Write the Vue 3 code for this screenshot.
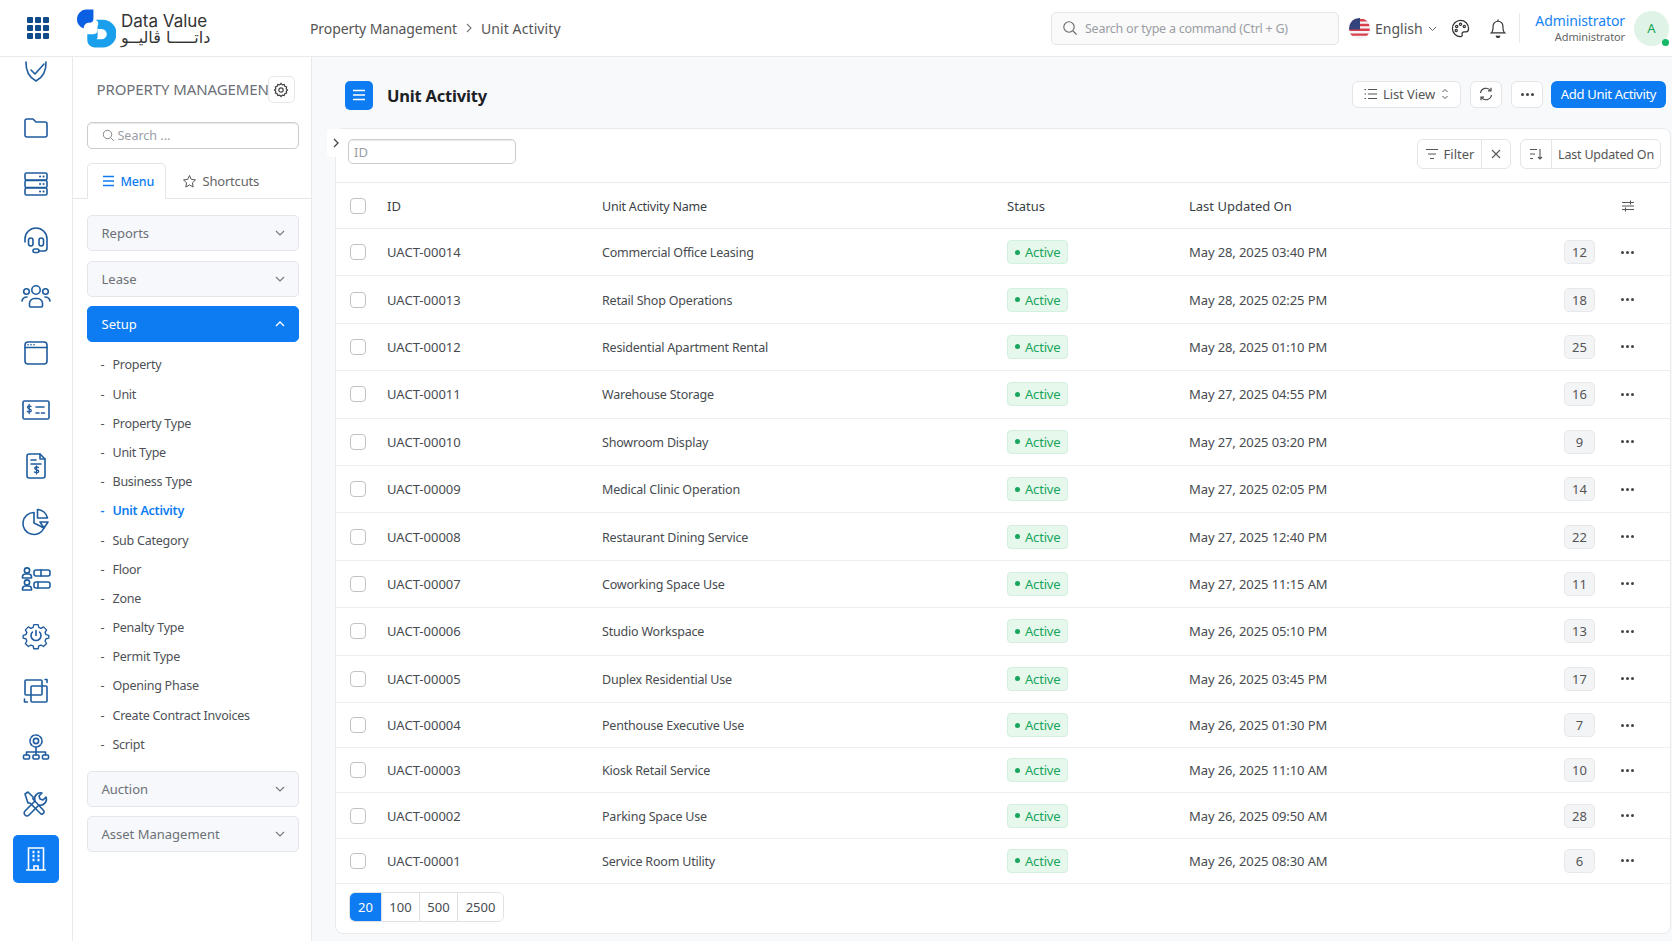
<script setup>
const railIcons = ['shield', 'folder', 'server', 'headset', 'team', 'browser', 'bill', 'invoice', 'pie', 'people', 'gear', 'squares', 'org', 'tools']

const setupLinks = [
  'Property', 'Unit', 'Property Type', 'Unit Type', 'Business Type', 'Unit Activity', 'Sub Category',
  'Floor', 'Zone', 'Penalty Type', 'Permit Type', 'Opening Phase', 'Create Contract Invoices', 'Script'
]

const rows = [
  { id: 'UACT-00014', name: 'Commercial Office Leasing', updated: 'May 28, 2025 03:40 PM', count: 12 },
  { id: 'UACT-00013', name: 'Retail Shop Operations', updated: 'May 28, 2025 02:25 PM', count: 18 },
  { id: 'UACT-00012', name: 'Residential Apartment Rental', updated: 'May 28, 2025 01:10 PM', count: 25 },
  { id: 'UACT-00011', name: 'Warehouse Storage', updated: 'May 27, 2025 04:55 PM', count: 16 },
  { id: 'UACT-00010', name: 'Showroom Display', updated: 'May 27, 2025 03:20 PM', count: 9 },
  { id: 'UACT-00009', name: 'Medical Clinic Operation', updated: 'May 27, 2025 02:05 PM', count: 14 },
  { id: 'UACT-00008', name: 'Restaurant Dining Service', updated: 'May 27, 2025 12:40 PM', count: 22 },
  { id: 'UACT-00007', name: 'Coworking Space Use', updated: 'May 27, 2025 11:15 AM', count: 11 },
  { id: 'UACT-00006', name: 'Studio Workspace', updated: 'May 26, 2025 05:10 PM', count: 13 },
  { id: 'UACT-00005', name: 'Duplex Residential Use', updated: 'May 26, 2025 03:45 PM', count: 17 },
  { id: 'UACT-00004', name: 'Penthouse Executive Use', updated: 'May 26, 2025 01:30 PM', count: 7, tight: true },
  { id: 'UACT-00003', name: 'Kiosk Retail Service', updated: 'May 26, 2025 11:10 AM', count: 10, tight: true },
  { id: 'UACT-00002', name: 'Parking Space Use', updated: 'May 26, 2025 09:50 AM', count: 28, tight: true },
  { id: 'UACT-00001', name: 'Service Room Utility', updated: 'May 26, 2025 08:30 AM', count: 6, tight: true }
]
</script>

<template>
  <div class="page">
    <header class="topbar">
      <div class="apps">
        <i v-for="n in 9" :key="n"></i>
      </div>
      <div class="logo">
        <svg class="logo-mark" width="40" height="43" viewBox="0 0 39 39">
          <path d="M9.500 1H17v9a4 4 0 0 1-4 4h-1a5 5 0 0 0-4.500 5.500A9.500 9.500 0 0 1 9.500 1z" fill="#0b5fe3" />
          <path d="M20 11h6a13.500 13.500 0 0 1 0 27h-8a7 7 0 0 1-7-7v-6h6a4 4 0 0 0 4-4v-4a4 4 0 0 0-2-6z" fill="#1a9fec" />
          <path d="M21 20h4a4.500 4.500 0 0 1 0 10h-5a3 3 0 0 0 1-3z" fill="#fff" />
        </svg>
        <div class="logo-text">
          <span class="logo-en">Data Value</span>
          <span class="logo-ar">داتـــــا ڤاليــو</span>
        </div>
      </div>
      <nav class="crumbs">
        <span>Property Management</span>
        <svg width="10" height="10" viewBox="0 0 10 10"><path d="M3 1l4 4-4 4" fill="none" stroke="#777" stroke-width="1.100" /></svg>
        <span class="crumb-last">Unit Activity</span>
      </nav>
      <div class="command">
        <svg width="16" height="16" viewBox="0 0 16 16"><circle cx="7" cy="7" r="5.200" fill="none" stroke="#666" stroke-width="1.100" /><path d="M11 11l3.600 3.600" stroke="#666" stroke-width="1.100" /></svg>
        <span>Search or type a command (Ctrl + G)</span>
      </div>
      <div class="lang">
        <svg class="flag" width="21" height="21" viewBox="0 0 21 21">
          <defs><clipPath id="flagClip"><circle cx="10.500" cy="10.500" r="10.500" /></clipPath></defs>
          <g clip-path="url(#flagClip)">
            <rect width="21" height="21" fill="#f4f4f6" />
            <path d="M0 1h21v2.400H0zM0 5.800h21v2.400H0zM0 10.600h21V13H0zM0 15.400h21v2.400H0z" fill="#d8404c" />
            <rect width="11" height="11.500" fill="#33437c" />
          </g>
        </svg>
        <span>English</span>
        <svg width="9" height="9" viewBox="0 0 9 9"><path d="M1 3l3.500 3.500L8 3" fill="none" stroke="#666" stroke-width="1" /></svg>
      </div>
      <svg class="top-icon" width="19" height="19" viewBox="0 0 20 20" fill="none" stroke="#333" stroke-width="1.300">
        <path d="M10 1.500a8.500 8.500 0 0 0 0 17c1.600 0 2.200-1 1.800-2.200-.5-1.600.3-2.800 2-2.800h2c1.500 0 2.700-1.200 2.700-3.200C18.500 5 14.700 1.500 10 1.500z" />
        <circle cx="6" cy="8" r="1.200" /><circle cx="10" cy="5.500" r="1.200" /><circle cx="14" cy="8" r="1.200" /><circle cx="5.500" cy="12" r="1.200" />
      </svg>
      <svg class="top-icon bell" width="18" height="22" viewBox="0 0 20 22" fill="none" stroke="#333" stroke-width="1.300">
        <path d="M2.500 16.500c1.500-1.500 2-2.500 2-5.500V9a5.500 5.500 0 0 1 11 0v2c0 3 .5 4 2 5.500z" /><path d="M10 1.500v2" /><path d="M8 19.500a2 2 0 0 0 4 0" fill="#333" />
      </svg>
      <div class="sep"></div>
      <div class="user">
        <span class="user-name">Administrator</span>
        <span class="user-role">Administrator</span>
      </div>
      <div class="avatar">A<i></i></div>
    </header>

    <div class="body">
      <aside class="rail">
        <div class="rail-list">
          <div v-for="icon in railIcons" :key="icon" class="rail-item">
            <svg width="32" height="32" viewBox="0 0 32 32" fill="none" stroke="#1f5c9e" stroke-width="1.600" stroke-linecap="round" stroke-linejoin="round">
              <template v-if="icon === 'shield'">
                <path d="M6 7c-.3 9 2.500 15 10 19 7.500-4 10.300-10 10-19" /><path d="M11 15l4 4 9-10" />
              </template>
              <template v-else-if="icon === 'folder'">
                <path d="M5 9a2 2 0 0 1 2-2h6l3 3h9a2 2 0 0 1 2 2v11a2 2 0 0 1-2 2H7a2 2 0 0 1-2-2z" />
              </template>
              <template v-else-if="icon === 'server'">
                <rect x="5" y="5" width="22" height="7" rx="1.500" /><rect x="5" y="12.500" width="22" height="7" rx="1.500" /><rect x="5" y="20" width="22" height="7" rx="1.500" />
                <path d="M20 8.500h.1M23.500 8.500h.1M20 16h.1M23.500 16h.1M20 23.500h.1M23.500 23.500h.1" stroke-width="2" />
              </template>
              <template v-else-if="icon === 'headset'">
                <path d="M5 18v-3a11 11 0 0 1 22 0v9a3 3 0 0 1-3 3h-5" /><rect x="8.500" y="14" width="4.500" height="8" rx="2.200" /><rect x="19" y="14" width="4.500" height="8" rx="2.200" /><rect x="13" y="25" width="6" height="3.500" rx="1.700" />
              </template>
              <template v-else-if="icon === 'team'">
                <circle cx="16" cy="9" r="4.200" /><circle cx="6.500" cy="10.500" r="2.800" /><circle cx="25.500" cy="10.500" r="2.800" />
                <path d="M9.500 25v-2.500a5 5 0 0 1 5-5h3a5 5 0 0 1 5 5V25a1 1 0 0 1-1 1h-11a1 1 0 0 1-1-1z" /><path d="M2 20c.5-2.500 2-4 5-4M30 20c-.5-2.500-2-4-5-4" />
              </template>
              <template v-else-if="icon === 'browser'">
                <rect x="5" y="5" width="22" height="22" rx="3" /><path d="M5 10.500h22" /><path d="M8 7.800h.1M11 7.800h.1M14 7.800h.1" />
              </template>
              <template v-else-if="icon === 'bill'">
                <rect x="3" y="7" width="26" height="18" rx="1.500" /><path d="M16 13h8M16 19h3M21.500 19h3" />
                <path d="M11 12.500c-.8-.8-3.500-1-3.500.8 0 2 3.800 1 3.800 3.200 0 1.800-3 1.700-4 .7M9.200 10.500v9" stroke-width="1.300" />
              </template>
              <template v-else-if="icon === 'invoice'">
                <path d="M20 4H9a2 2 0 0 0-2 2v20a2 2 0 0 0 2 2h14a2 2 0 0 0 2-2V9z" /><path d="M20 4v5h5M11 10h5M11 14h10" />
                <path d="M18.500 17.500c-.8-.8-3.800-.8-3.800.8 0 1.900 4 1 4 3 0 1.700-3.200 1.600-4.300.7M16.500 16v8" stroke-width="1.300" />
              </template>
              <template v-else-if="icon === 'pie'">
                <path d="M14 6.500a11 11 0 1 0 10 15.500l-10-5z" /><path d="M17.500 3.500A10.500 10.500 0 0 1 27.500 12H17.500z" /><path d="M20 16h8l-4 6z" />
              </template>
              <template v-else-if="icon === 'people'">
                <circle cx="7" cy="7.500" r="2.600" /><path d="M2.500 15v-1.500a3 3 0 0 1 3-2.500h3a3 3 0 0 1 3 2.500V15z" /><rect x="14" y="7" width="16" height="6" rx="2" /><path d="M21 7v6" />
                <circle cx="7" cy="19.500" r="2.600" /><path d="M2.500 27v-1.500a3 3 0 0 1 3-2.500h3a3 3 0 0 1 3 2.500V27z" /><rect x="14" y="19" width="16" height="6" rx="2" /><path d="M18 19v6" />
              </template>
              <template v-else-if="icon === 'gear'">
                <path d="M13.500 4h5l.8 3.200 2.600 1.100 2.900-1.700 3.500 3.500-1.700 2.900 1.100 2.600 3.200.8v3.200l-3.200.8-1.100 2.600 1.700 2.900-3.500 3.500-2.900-1.700-2.600 1.100-.8 3.200h-5l-.8-3.200-2.600-1.100-2.900 1.700-3.500-3.500 1.700-2.900-1.100-2.600-3.200-.8v-3.200l3.200-.8 1.100-2.600-1.700-2.900 3.500-3.500 2.900 1.700 2.600-1.100z" transform="translate(2.200 2.200) scale(.86)" />
                <path d="M12.500 13a5 5 0 1 0 7 0M16 11.500v5" />
              </template>
              <template v-else-if="icon === 'squares'">
                <rect x="5" y="5" width="17" height="15" rx="1" /><rect x="11" y="11" width="16" height="16" rx="1" />
                <path d="M25 4.500h2v3M4.500 24v3h3" />
              </template>
              <template v-else-if="icon === 'org'">
                <circle cx="16" cy="9" r="2.600" /><circle cx="16" cy="9" r="6" stroke-dasharray="3 1.500" />
                <path d="M16 15v8M6.500 23v-3h19v3" /><rect x="3.500" y="23" width="6" height="4" rx="1" /><rect x="13" y="23" width="6" height="4" rx="1" /><rect x="22.500" y="23" width="6" height="4" rx="1" />
              </template>
              <template v-else-if="icon === 'tools'">
                <path d="M5 6l3-2 5 5 0 2 11 12a2.500 2.500 0 0 1-3 3L10 15H8z" /><path d="M26 9l-3 3-3-1-1-3 3-3a6 6 0 0 0-7 8L5 23a2.500 2.500 0 0 0 4 4l10-10a6 6 0 0 0 7-8z" />
              </template>
            </svg>
          </div>
          <div class="rail-active">
            <svg width="24" height="28" viewBox="0 0 24 28" fill="none" stroke="#fff" stroke-width="1.600">
              <path d="M4.500 25V3h15v22M2 25h20M10 25v-4h4v4" />
              <path d="M8.500 7h2M13.500 7h2M8.500 11h2M13.500 11h2M8.500 15h2M13.500 15h2" stroke-width="2.400" />
            </svg>
          </div>
        </div>
      </aside>

      <aside class="side">
        <div class="side-head">
          <span class="side-title">PROPERTY MANAGEMENT</span>
          <button class="gear-btn">
            <svg width="16" height="16" viewBox="0 0 16 16" fill="none" stroke="#444" stroke-width="1.200">
              <path d="M8 1.500l1.300 1.400 1.900-.4.600 1.800 1.800.6-.4 1.900L14.500 8l-1.300 1.200.4 1.900-1.800.6-.6 1.800-1.900-.4L8 14.500l-1.300-1.400-1.900.4-.6-1.800-1.800-.6.4-1.900L1.500 8l1.300-1.200-.4-1.900 1.800-.6.6-1.800 1.900.4z" />
              <circle cx="8" cy="8" r="2.200" />
            </svg>
          </button>
        </div>
        <div class="side-search">
          <svg width="13" height="13" viewBox="0 0 13 13"><circle cx="5.500" cy="5.500" r="4.200" fill="none" stroke="#888" /><path d="M8.700 8.700l3.200 3.200" stroke="#888" /></svg>
          <span>Search ...</span>
        </div>
        <div class="tabs">
          <div class="tab active">
            <svg width="13" height="12" viewBox="0 0 13 12"><path d="M1 1.500h11M1 6h11M1 10.500h11" stroke="#0d7cf2" stroke-width="1.400" /></svg>
            <span>Menu</span>
          </div>
          <div class="tab">
            <svg width="15" height="15" viewBox="0 0 15 15"><path d="M7.500 1.500l1.800 3.900 4.200.5-3.100 2.900.8 4.200-3.700-2.100-3.700 2.100.8-4.200L1.500 5.900l4.200-.5z" fill="none" stroke="#555" /></svg>
            <span>Shortcuts</span>
          </div>
        </div>

        <div class="accordion">
          <div class="acc">
            <span>Reports</span>
            <svg width="12" height="12" viewBox="0 0 12 12"><path d="M2 4l4 4 4-4" fill="none" stroke="#777" stroke-width="1.100" /></svg>
          </div>
          <div class="acc">
            <span>Lease</span>
            <svg width="12" height="12" viewBox="0 0 12 12"><path d="M2 4l4 4 4-4" fill="none" stroke="#777" stroke-width="1.100" /></svg>
          </div>
          <div class="acc open">
            <span>Setup</span>
            <svg width="12" height="12" viewBox="0 0 12 12"><path d="M2 8l4-4 4 4" fill="none" stroke="#fff" stroke-width="1.300" /></svg>
          </div>
          <ul class="links">
            <li v-for="link in setupLinks" :key="link" :class="{ current: link === 'Unit Activity' }">
              <span class="dash">-</span>{{ link }}
            </li>
          </ul>
          <div class="acc">
            <span>Auction</span>
            <svg width="12" height="12" viewBox="0 0 12 12"><path d="M2 4l4 4 4-4" fill="none" stroke="#777" stroke-width="1.100" /></svg>
          </div>
          <div class="acc">
            <span>Asset Management</span>
            <svg width="12" height="12" viewBox="0 0 12 12"><path d="M2 4l4 4 4-4" fill="none" stroke="#777" stroke-width="1.100" /></svg>
          </div>
        </div>
      </aside>

      <main class="main">
        <div class="title-row">
          <div class="page-icon">
            <svg width="14" height="12" viewBox="0 0 14 12"><path d="M1 1.500h12M1 6h12M1 10.500h12" stroke="#fff" stroke-width="1.600" /></svg>
          </div>
          <h1>Unit Activity</h1>
          <div class="actions">
            <button class="btn list-view">
              <svg width="13" height="12" viewBox="0 0 13 12"><path d="M4 1.500h9M4 6h9M4 10.500h9M.5 1.500h1.500M.5 6h1.500M.5 10.500h1.500" stroke="#555" /></svg>
              <span>List View</span>
              <svg width="8" height="12" viewBox="0 0 8 12"><path d="M1.500 4L4 1.500 6.500 4M1.500 8L4 10.500 6.500 8" fill="none" stroke="#555" /></svg>
            </button>
            <button class="btn square">
              <svg width="16" height="16" viewBox="0 0 16 16" fill="none" stroke="#444" stroke-width="1.200"><path d="M2.500 7a5.600 5.600 0 0 1 10-2.500M13.500 9a5.600 5.600 0 0 1-10 2.500" /><path d="M13 1.800v3h-3M3 14.200v-3h3" /></svg>
            </button>
            <button class="btn square dots"><i></i><i></i><i></i></button>
            <button class="btn primary">Add Unit Activity</button>
          </div>
        </div>

        <section class="card">
          <div class="collapse-tab">
            <svg width="10" height="12" viewBox="0 0 10 12"><path d="M3 2l4 4-4 4" fill="none" stroke="#444" stroke-width="1.300" /></svg>
          </div>
          <div class="filters">
            <div class="id-input">ID</div>
            <div class="filter-right">
              <div class="group filter-group">
                <div class="cell filter-cell">
                  <svg width="14" height="12" viewBox="0 0 14 12"><path d="M1 1.500h12M3 6h8M5 10.500h4" stroke="#555" stroke-width="1.100" /></svg>
                  <span>Filter</span>
                </div>
                <div class="cell close-cell">
                  <svg width="10" height="10" viewBox="0 0 10 10"><path d="M1 1l8 8M9 1l-8 8" stroke="#555" stroke-width="1.100" /></svg>
                </div>
              </div>
              <div class="group sort-group">
                <div class="cell sort-icon">
                  <svg width="14" height="14" viewBox="0 0 14 14" fill="none" stroke="#555" stroke-width="1.100"><path d="M1 2.500h7M1 7h5M1 11.500h3M11 2v10M9 10l2 2 2-2" /></svg>
                </div>
                <div class="cell sort-label">Last Updated On</div>
              </div>
            </div>
          </div>

          <div class="row head">
            <span class="check"></span>
            <span>ID</span>
            <span class="nm">Unit Activity Name</span>
            <span>Status</span>
            <span>Last Updated On</span>
            <span></span>
            <span class="end">
              <svg width="14" height="14" viewBox="0 0 14 14" fill="none" stroke="#555" stroke-width="1.100"><path d="M1 3.500h12M1 7h12M1 10.500h12M9.500 1.500v4M4.500 8.500v4" /></svg>
            </span>
          </div>
          <div v-for="row in rows" :key="row.id" class="row" :class="{ tight: row.tight }">
            <span class="check"></span>
            <span>{{ row.id }}</span>
            <span class="nm">{{ row.name }}</span>
            <span><span class="status"><i></i>Active</span></span>
            <span class="date">{{ row.updated }}</span>
            <span class="count-wrap"><span class="count">{{ row.count }}</span></span>
            <span class="end row-dots"><i></i><i></i><i></i></span>
          </div>

          <div class="pager">
            <button class="on">20</button>
            <button>100</button>
            <button>500</button>
            <button>2500</button>
          </div>
        </section>
      </main>
    </div>
  </div>
</template>

<style>
html, body {
  margin: 0;
  background: #fff;
}
</style>

<style scoped>
.page {
  width: 1672px;
  height: 941px;
  overflow: hidden;
  display: flex;
  flex-direction: column;
  font-family: "Noto Sans", "Liberation Sans", sans-serif;
  font-size: 13px;
  color: #3a3f45;
  background: #fff;
}

/* top bar */
.topbar {
  height: 57px;
  flex: none;
  box-sizing: border-box;
  border-bottom: 1px solid #e8eaed;
  display: flex;
  align-items: center;
  position: relative;
  z-index: 2;
  background: #fff;
}
.topbar > * {
  flex: none;
}
.apps {
  display: grid;
  grid-template-columns: repeat(3, 6px);
  gap: 2px;
  margin-left: 27px;
}
.apps i {
  height: 6px;
  background: #0f4a8a;
  border-radius: 1px;
}
.logo {
  display: flex;
  align-items: center;
  gap: 5px;
  margin-left: 27px;
  width: 234px;
  height: 48px;
}
.logo-mark {
  flex: none;
}
.logo-text {
  display: flex;
  flex-direction: column;
  color: #333;
  margin-top: 2px;
}
.logo-en {
  font-family: "Inter", sans-serif;
  font-size: 17px;
  line-height: 17px;
}
.logo-ar {
  font-family: "DejaVu Sans", sans-serif;
  font-size: 16px;
  line-height: 16px;
  white-space: nowrap;
}
.crumbs {
  display: flex;
  align-items: center;
  gap: 7px;
  font-size: 14px;
  letter-spacing: -0.1px;
  color: #555;
  width: 741px;
}
.crumb-last {
  letter-spacing: 0.1px;
}
.command {
  width: 288px;
  height: 33px;
  box-sizing: border-box;
  border: 1px solid #e3e5e8;
  border-radius: 5px;
  background: #fafafb;
  display: flex;
  align-items: center;
  gap: 7px;
  padding-left: 10px;
  color: #9a9ea4;
  font-size: 12.500px;
  letter-spacing: -0.25px;
}
.lang {
  display: flex;
  align-items: center;
  gap: 5px;
  margin-left: 10px;
  font-size: 14px;
  color: #555;
  width: 102px;
}
.top-icon.bell {
  margin-left: 19px;
}
.sep {
  width: 1px;
  height: 30px;
  background: #e8eaed;
  margin-left: 12px;
}
.user {
  display: flex;
  flex-direction: column;
  align-items: flex-end;
  width: 105px;
  line-height: 16px;
  padding-top: 1px;
}
.user-name {
  color: #1683f4;
  font-size: 14px;
  letter-spacing: -0.1px;
}
.user-role {
  color: #666;
  font-size: 11px;
  letter-spacing: -0.1px;
}
.avatar {
  width: 35px;
  height: 35px;
  border-radius: 50%;
  background: #dff3e6;
  color: #14a356;
  margin-left: 9px;
  display: flex;
  align-items: center;
  justify-content: center;
  font-size: 13px;
  position: relative;
}
.avatar i {
  position: absolute;
  right: 0;
  bottom: 0;
  width: 7px;
  height: 7px;
  border-radius: 50%;
  background: #14b866;
}

.body {
  flex: 1;
  display: flex;
  min-height: 0;
}

/* icon rail */
.rail {
  width: 73px;
  flex: none;
  box-sizing: border-box;
  border-right: 1px solid #e8eaed;
  overflow: hidden;
}
.rail-list {
  margin-top: -14px;
  display: flex;
  flex-direction: column;
  align-items: center;
}
.rail-item {
  height: 56.400px;
  display: flex;
  align-items: center;
  justify-content: center;
}
.rail-active {
  width: 46px;
  height: 48px;
  margin-top: 3px;
  background: #0d7cf2;
  border-radius: 5px;
  display: flex;
  align-items: center;
  justify-content: center;
}

/* menu sidebar */
.side {
  width: 239px;
  flex: none;
  box-sizing: border-box;
  border-right: 1px solid #e8eaed;
  padding: 19px 12.500px 0 13.500px;
  background: #fff;
}
.side-head {
  display: flex;
  align-items: center;
  height: 27px;
  padding-left: 10px;
}
.side-title {
  width: 171px;
  overflow: hidden;
  white-space: nowrap;
  font-size: 15px;
  letter-spacing: -0.1px;
  color: #6c7077;
  margin-top: -2px;
}
.gear-btn {
  width: 27px;
  height: 27px;
  padding: 0;
  border: 1px solid #e6e8eb;
  border-radius: 5px;
  background: #fff;
  display: flex;
  align-items: center;
  justify-content: center;
}
.side-search {
  height: 27px;
  box-sizing: border-box;
  margin-top: 19px;
  border: 1px solid #c9ccd1;
  border-radius: 5px;
  box-shadow: inset 0 1px 1px rgba(0, 0, 0, 0.08);
  display: flex;
  align-items: center;
  gap: 3px;
  padding-left: 14px;
  color: #9a9ea4;
  font-size: 12.500px;
}
.tabs {
  margin: 14px -12.500px 0 -13.500px;
  padding-left: 13.500px;
  height: 36px;
  box-sizing: border-box;
  border-bottom: 1px solid #e3e5e8;
  display: flex;
}
.tab {
  display: flex;
  align-items: center;
  gap: 6px;
  padding: 0 0 0 16px;
  height: 36px;
  box-sizing: border-box;
  color: #666;
  letter-spacing: -0.2px;
}
.tab svg {
  flex: none;
}
.tab.active {
  width: 79px;
  padding-left: 14px;
  border: 1px solid #e3e5e8;
  border-bottom-color: #fff;
  border-radius: 5px 5px 0 0;
  color: #0d7cf2;
  font-size: 12.500px;
  font-weight: 500;
}
.accordion {
  margin-top: 16px;
}
.acc {
  height: 36px;
  box-sizing: border-box;
  margin-bottom: 9.700px;
  border: 1px solid #e3e6ea;
  border-radius: 5px;
  background: #f6f8fb;
  display: flex;
  align-items: center;
  justify-content: space-between;
  padding: 0 12px 0 14px;
  color: #6c7077;
}
.acc.open {
  background: #0d7cf2;
  border-color: #0d7cf2;
  color: #fff;
  margin-bottom: 8px;
}
.links {
  list-style: none;
  margin: 0 0 11.500px;
  padding: 0;
}
.links li {
  height: 29.200px;
  line-height: 29.200px;
  padding-left: 14px;
  color: #4d5156;
  font-size: 12.500px;
  letter-spacing: -0.25px;
}
.links li.current {
  color: #0d7cf2;
  font-weight: 600;
}
.dash {
  display: inline-block;
  width: 12px;
}

/* content */
.main {
  flex: 1;
  min-width: 0;
  background: #f8f9fb;
  padding-left: 23px;
  position: relative;
}
.title-row {
  height: 71px;
  box-sizing: border-box;
  padding: 5px 0 0 10px;
  display: flex;
  align-items: center;
}
.page-icon {
  width: 28px;
  height: 29px;
  background: #0d7cf2;
  border-radius: 5px;
  display: flex;
  align-items: center;
  justify-content: center;
}
h1 {
  margin: 0 0 0 14px;
  font-size: 16.500px;
  letter-spacing: -0.2px;
  font-weight: 700;
  color: #1c2126;
}
.actions {
  margin-left: auto;
  margin-right: 6px;
  margin-top: -2px;
  display: flex;
  gap: 9px;
}
.btn {
  height: 27px;
  box-sizing: border-box;
  border: 1px solid #e3e5e8;
  border-radius: 6px;
  background: #fff;
  font: inherit;
  color: #555;
  display: flex;
  align-items: center;
  justify-content: center;
  gap: 6px;
  padding: 0;
}
.list-view {
  width: 109px;
  letter-spacing: -0.1px;
}
.square {
  width: 32px;
}
.dots {
  gap: 2px;
}
.dots i, .row-dots i {
  width: 3px;
  height: 3px;
  border-radius: 50%;
  background: #444;
}
.btn.primary {
  width: 115px;
  border: 0;
  margin-left: -1px;
  background: #0d7cf2;
  color: #fff;
  letter-spacing: -0.3px;
}

.card {
  width: 1336px;
  height: 806px;
  box-sizing: border-box;
  border: 1px solid #e8eaed;
  border-radius: 8px;
  background: #fff;
  position: relative;
}
.collapse-tab {
  position: absolute;
  left: -9px;
  top: 0;
  width: 18px;
  height: 28px;
  background: #fff;
  border-radius: 4px;
  display: flex;
  align-items: center;
  justify-content: center;
}
.filters {
  height: 54px;
  display: flex;
  align-items: center;
  justify-content: space-between;
  border-bottom: 1px solid #e8eaed;
  padding: 0 9px 0 12px;
  box-sizing: border-box;
}
.id-input {
  width: 168px;
  height: 25px;
  line-height: 25px;
  box-sizing: border-box;
  margin-top: -8px;
  border: 1px solid #c9ccd1;
  border-radius: 5px;
  box-shadow: inset 0 1px 1px rgba(0, 0, 0, 0.08);
  padding-left: 5px;
  color: #9a9ea4;
}
.filter-right {
  display: flex;
  gap: 9px;
  margin-top: -3px;
}
.group {
  height: 30px;
  box-sizing: border-box;
  border: 1px solid #e3e5e8;
  border-radius: 6px;
  display: flex;
}
.cell {
  display: flex;
  align-items: center;
  justify-content: center;
  gap: 5px;
  color: #555;
}
.filter-cell {
  width: 63px;
  border-right: 1px solid #e3e5e8;
}
.close-cell {
  width: 28px;
}
.sort-icon {
  width: 30px;
  border-right: 1px solid #e3e5e8;
}
.sort-label {
  width: 108px;
  font-size: 12.500px;
  letter-spacing: -0.2px;
}
.row {
  display: grid;
  grid-template-columns: 37px 215px 405px 182px 1fr 60px 66px;
  align-items: center;
  height: 47.400px;
  box-sizing: border-box;
  padding: 0 9px 0 14px;
  border-bottom: 1px solid #eceef0;
  color: #474b50;
}
.row.tight {
  height: 45.250px;
}
.row.head {
  height: 46px;
  border-bottom: 1px solid #e8eaed;
  color: #3a3f45;
}
.nm {
  font-size: 12.500px;
  letter-spacing: -0.2px;
  padding-top: 1px;
}
.date {
  letter-spacing: -0.1px;
}
.check {
  width: 16px;
  height: 16px;
  box-sizing: border-box;
  border: 1px solid #bfc3c8;
  border-radius: 4px;
  background: #fff;
}
.status {
  display: inline-flex;
  align-items: center;
  gap: 5px;
  height: 24px;
  box-sizing: border-box;
  padding: 0 7px;
  background: #e6f7ec;
  border: 1px solid #d3efdd;
  border-radius: 4px;
  color: #17a65c;
  letter-spacing: -0.2px;
}
.status i {
  width: 5px;
  height: 5px;
  border-radius: 50%;
  background: #17a65c;
}
.count-wrap {
  display: flex;
  justify-content: flex-end;
}
.count {
  min-width: 31px;
  height: 24px;
  line-height: 22px;
  box-sizing: border-box;
  text-align: center;
  background: #f3f4f6;
  border: 1px solid #e6e8eb;
  border-radius: 5px;
  color: #555;
}
.end {
  display: flex;
  align-items: center;
  justify-content: center;
}
.row-dots {
  gap: 2px;
  margin-left: -1px;
}
.pager {
  display: inline-flex;
  margin: 8px 0 0 13px;
  height: 30px;
  box-sizing: border-box;
  border: 1px solid #dfe1e4;
  border-radius: 6px;
  overflow: hidden;
}
.pager button {
  border: 0;
  border-right: 1px solid #dfe1e4;
  background: #fff;
  font: inherit;
  color: #474b50;
  padding: 0;
  width: 38px;
}
.pager button:first-child {
  width: 32px;
}
.pager button:last-child {
  border-right: 0;
  width: 45px;
}
.pager button.on {
  background: #0d7cf2;
  color: #fff;
}
</style>
